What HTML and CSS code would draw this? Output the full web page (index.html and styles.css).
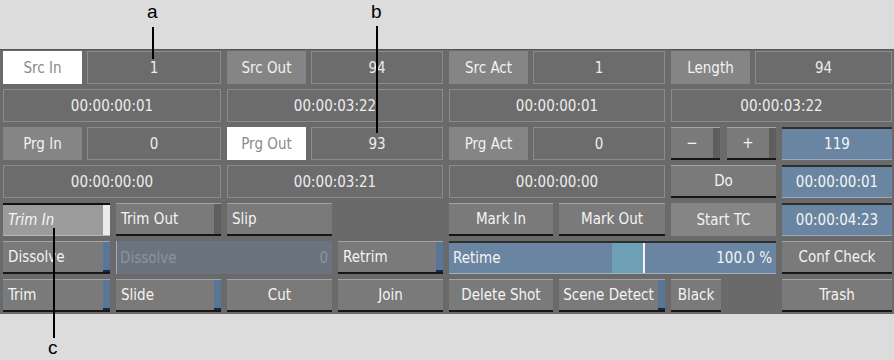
FILE: index.html
```html
<!DOCTYPE html>
<html lang="en">
<head>
    <meta charset="UTF-8">
    <title>Edit Controls</title>
    <link rel="stylesheet" href="styles.css">
</head>
<body>
    <div class="callouts-top">
        <div class="callout callout-a"><span>a</span></div>
        <div class="callout callout-b"><span>b</span></div>
    </div>

    <div class="panel">
        <!-- row 1 -->
        <div class="pair span2"><div class="label active">Src In</div><div class="field">1</div></div>
        <div class="pair span2"><div class="label">Src Out</div><div class="field">94</div></div>
        <div class="pair span2"><div class="label">Src Act</div><div class="field">1</div></div>
        <div class="pair span2"><div class="label">Length</div><div class="field">94</div></div>

        <!-- row 2 -->
        <div class="field span2">00:00:00:01</div>
        <div class="field span2">00:00:03:22</div>
        <div class="field span2">00:00:00:01</div>
        <div class="field span2">00:00:03:22</div>

        <!-- row 3 -->
        <div class="pair span2"><div class="label">Prg In</div><div class="field">0</div></div>
        <div class="pair span2"><div class="label active">Prg Out</div><div class="field">93</div></div>
        <div class="pair span2"><div class="label">Prg Act</div><div class="field">0</div></div>
        <div class="duo">
            <div class="btn center"><span class="txt">&minus;</span><span class="tab"></span></div>
            <div class="btn center"><span class="txt">+</span><span class="tab"></span></div>
        </div>
        <div class="blue">119</div>

        <!-- row 4 -->
        <div class="field span2">00:00:00:00</div>
        <div class="field span2">00:00:03:21</div>
        <div class="field span2">00:00:00:00</div>
        <div class="btn center"><span class="txt">Do</span></div>
        <div class="blue">00:00:00:01</div>

        <!-- row 5 -->
        <div class="btn pressed"><span class="txt">Trim In</span><span class="tab white"></span></div>
        <div class="btn"><span class="txt">Trim Out</span><span class="tab"></span></div>
        <div class="btn"><span class="txt">Slip</span></div>
        <div class="gap"></div>
        <div class="btn center"><span class="txt">Mark In</span></div>
        <div class="btn center"><span class="txt">Mark Out</span></div>
        <div class="label flat">Start TC</div>
        <div class="blue">00:00:04:23</div>

        <!-- row 6 -->
        <div class="btn"><span class="txt">Dissolve</span><span class="tab blue-tab"></span></div>
        <div class="disabled span2"><span>Dissolve</span><span>0</span></div>
        <div class="btn"><span class="txt">Retrim</span><span class="tab blue-tab"></span></div>
        <div class="slider span3">
            <span class="slider-name">Retime</span>
            <span class="knob"></span>
            <span class="slider-value">100.0 %</span>
        </div>
        <div class="btn center"><span class="txt">Conf Check</span></div>

        <!-- row 7 -->
        <div class="btn"><span class="txt">Trim</span><span class="tab blue-tab"></span></div>
        <div class="btn"><span class="txt">Slide</span><span class="tab blue-tab"></span></div>
        <div class="btn center"><span class="txt">Cut</span></div>
        <div class="btn center"><span class="txt">Join</span></div>
        <div class="btn center"><span class="txt">Delete Shot</span></div>
        <div class="btn center tight"><span class="txt">Scene Detect</span><span class="tab blue-tab"></span></div>
        <div class="half"><div class="btn center"><span class="txt">Black</span></div></div>
        <div class="btn center"><span class="txt">Trash</span></div>

        <i class="lead lead-a"></i>
        <i class="lead lead-b"></i>
        <i class="lead lead-c"></i>
    </div>

    <div class="callouts-bottom">
        <div class="callout callout-c"><span>c</span></div>
    </div>
</body>
</html>
```

FILE: styles.css
```css
:root {
    --page: #dcdcdc;
    --panel: #6a6a6a;
    --field: #6c6c6c;
    --field-line: #8b8b8b;
    --label: #858585;
    --button: #7a7a7a;
    --slate: #6a85a1;
    --text: #ececec;
}

body {
    margin: 0;
    background: var(--page);
    font-family: "DejaVu Sans Condensed", "DejaVu Sans", sans-serif;
    font-size: 15px;
    color: var(--text);
    width: 894px;
    height: 360px;
    overflow: hidden;
}

/* callout letters */
.callouts-top {
    height: 49px;
    position: relative;
}

.callouts-bottom {
    height: 45px;
    position: relative;
}

.callout {
    position: absolute;
    font-family: "Liberation Sans", Arial, sans-serif;
    font-size: 19px;
    color: #000;
    line-height: 20px;
}

.callout-a { left: 147px; top: 2px; }
.callout-b { left: 371px; top: 2px; }
.callout-c { left: 48px; top: 24px; }

.lead {
    position: absolute;
    width: 2px;
    background: #000;
}

.lead-a { left: 152px; top: -23px; height: 32px; }
.lead-b { left: 376px; top: -24px; height: 107px; }
.lead-c { left: 53px; top: 178px; height: 110px; }

/* panel */
.panel {
    position: relative;
    background: var(--panel);
    border-top: 1px solid #565656;
    padding: 1px 2px 2px 3px;
    display: grid;
    grid-template-columns: 107px 105px 105px 105px 104px 106px 105px 1fr;
    grid-auto-rows: 33px;
    gap: 5px 6px;
}

.span2 { grid-column: span 2; }
.span3 { grid-column: span 3; }

.pair {
    display: flex;
    gap: 5px;
}

.label {
    width: 79px;
    flex-shrink: 0;
    background: var(--label);
    display: flex;
    align-items: center;
    justify-content: center;
    color: #f2f2f2;
}

.label.active {
    background: #fff;
    color: #8a8a8a;
}

.label.flat {
    width: auto;
}

.field {
    flex: 1;
    background: var(--field);
    border: 1px solid var(--field-line);
    display: flex;
    align-items: center;
    justify-content: center;
}

.blue {
    background: var(--slate);
    border-top: 2px solid #2e2e2e;
    border-bottom: 1px solid #9aa9ba;
    display: flex;
    align-items: center;
    justify-content: center;
    color: #f4f4f4;
}

/* buttons */
.btn {
    display: flex;
    background: var(--button);
    border-top: 1px solid #a2a2a2;
    border-bottom: 2px solid #161616;
    box-sizing: border-box;
    color: #f4f4f4;
}

.btn .txt {
    flex: 1;
    display: flex;
    align-items: center;
    padding: 0 5px;
    white-space: nowrap;
}

.btn.center .txt {
    justify-content: center;
}

.btn.tight .txt {
    padding: 0 1px;
}

.btn .tab {
    width: 7px;
    background: #5e5e5e;
    flex-shrink: 0;
}

.btn .tab.blue-tab {
    background: #5a7697;
    box-shadow: inset 0 -2px 0 #1c2460;
}

.btn.pressed {
    background: #9b9b9b;
    border-top: 2px solid #111;
    border-bottom: 1px solid #b8b8b8;
}

.btn.pressed .txt {
    font-style: italic;
    color: #f6f6f6;
}

.btn .tab.white {
    background: #ececec;
}

.duo {
    display: flex;
    gap: 7px;
}

.duo .btn {
    flex: 1;
}

.half {
    display: flex;
}

.half .btn {
    width: 50px;
}

.disabled {
    display: flex;
    align-items: center;
    justify-content: space-between;
    background: #6a737e;
    border-left: 1px solid #a6acb4;
    padding: 0 4px 0 3px;
    color: #8c939c;
}

.slider {
    position: relative;
    display: flex;
    align-items: center;
    justify-content: space-between;
    background: var(--slate);
    border-top: 2px solid #2e2e2e;
    border-bottom: 1px solid #a2b0c0;
    padding: 0 4px;
    color: #f4f4f4;
}

.slider .knob {
    position: absolute;
    left: 163px;
    top: 0;
    bottom: 0;
    width: 31px;
    background: #6da0b5;
    border-right: 2px solid #f4f4f4;
}

.slider-name, .slider-value {
    position: relative;
}
```
